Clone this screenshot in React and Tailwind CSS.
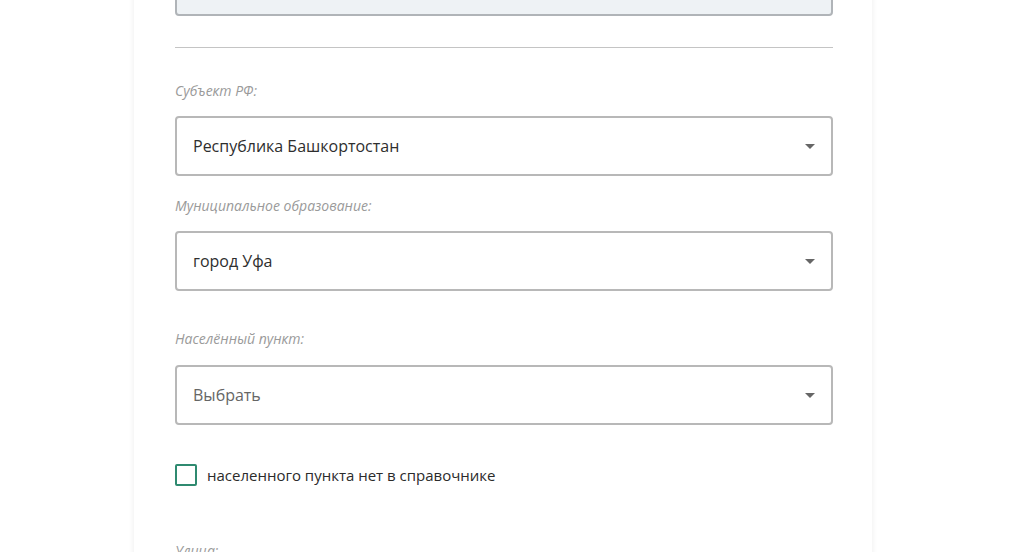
import React from "react";

function Caret() {
  return (
    <svg width="10" height="5" viewBox="0 0 10 5" className="shrink-0">
      <path d="M0 0 L10 0 L5 5 Z" fill="#666666" />
    </svg>
  );
}

function Select({ value, placeholder }) {
  return (
    <div className="flex h-[60px] items-center justify-between rounded-[4px] border-2 border-[#b8b8b8] bg-white pl-[16px] pr-[16px]">
      <span className={"text-[16px] " + (placeholder ? "text-[#666666]" : "text-[#2e2e2e]")}>{value}</span>
      <Caret />
    </div>
  );
}

function Label({ children }) {
  return <div className="text-[14px] italic leading-[18px] text-[#9a9a9a]">{children}</div>;
}

export default function App() {
  return (
    <div className="h-[552px] w-[1010px] overflow-hidden bg-white" style={{ fontFamily: '"Open Sans", "Noto Sans", sans-serif' }}>
      <div className="ml-[134px] h-[600px] w-[738px] bg-white pl-[41px] pr-[39px] shadow-[0_0_6px_rgba(0,0,0,0.08)]">
        <div className="-mt-[42px] h-[58px] rounded-[4px] border-2 border-[#b0b4b8] bg-[#eef2f5]" />
        <div className="mt-[31px] h-px bg-[#c4c4c4]" />
        <div className="mt-[34px]">
          <Label>Субъект РФ:</Label>
        </div>
        <div className="mt-[16px]">
          <Select value="Республика Башкортостан" />
        </div>
        <div className="mt-[21px]">
          <Label>Муниципальное образование:</Label>
        </div>
        <div className="mt-[16px]">
          <Select value="город Уфа" />
        </div>
        <div className="mt-[39px]">
          <Label>Населённый пункт:</Label>
        </div>
        <div className="mt-[17px]">
          <Select value="Выбрать" placeholder />
        </div>
        <label className="mt-[39px] flex items-center gap-[10px]">
          <span className="h-[22px] w-[22px] rounded-[2px] border-2 border-[#2f8a70]" />
          <span className="text-[15px] text-[#2b2b2b]">населенного пункта нет в справочнике</span>
        </label>
        <div className="mt-[55px]">
          <Label>Улица:</Label>
        </div>
      </div>
    </div>
  );
}
